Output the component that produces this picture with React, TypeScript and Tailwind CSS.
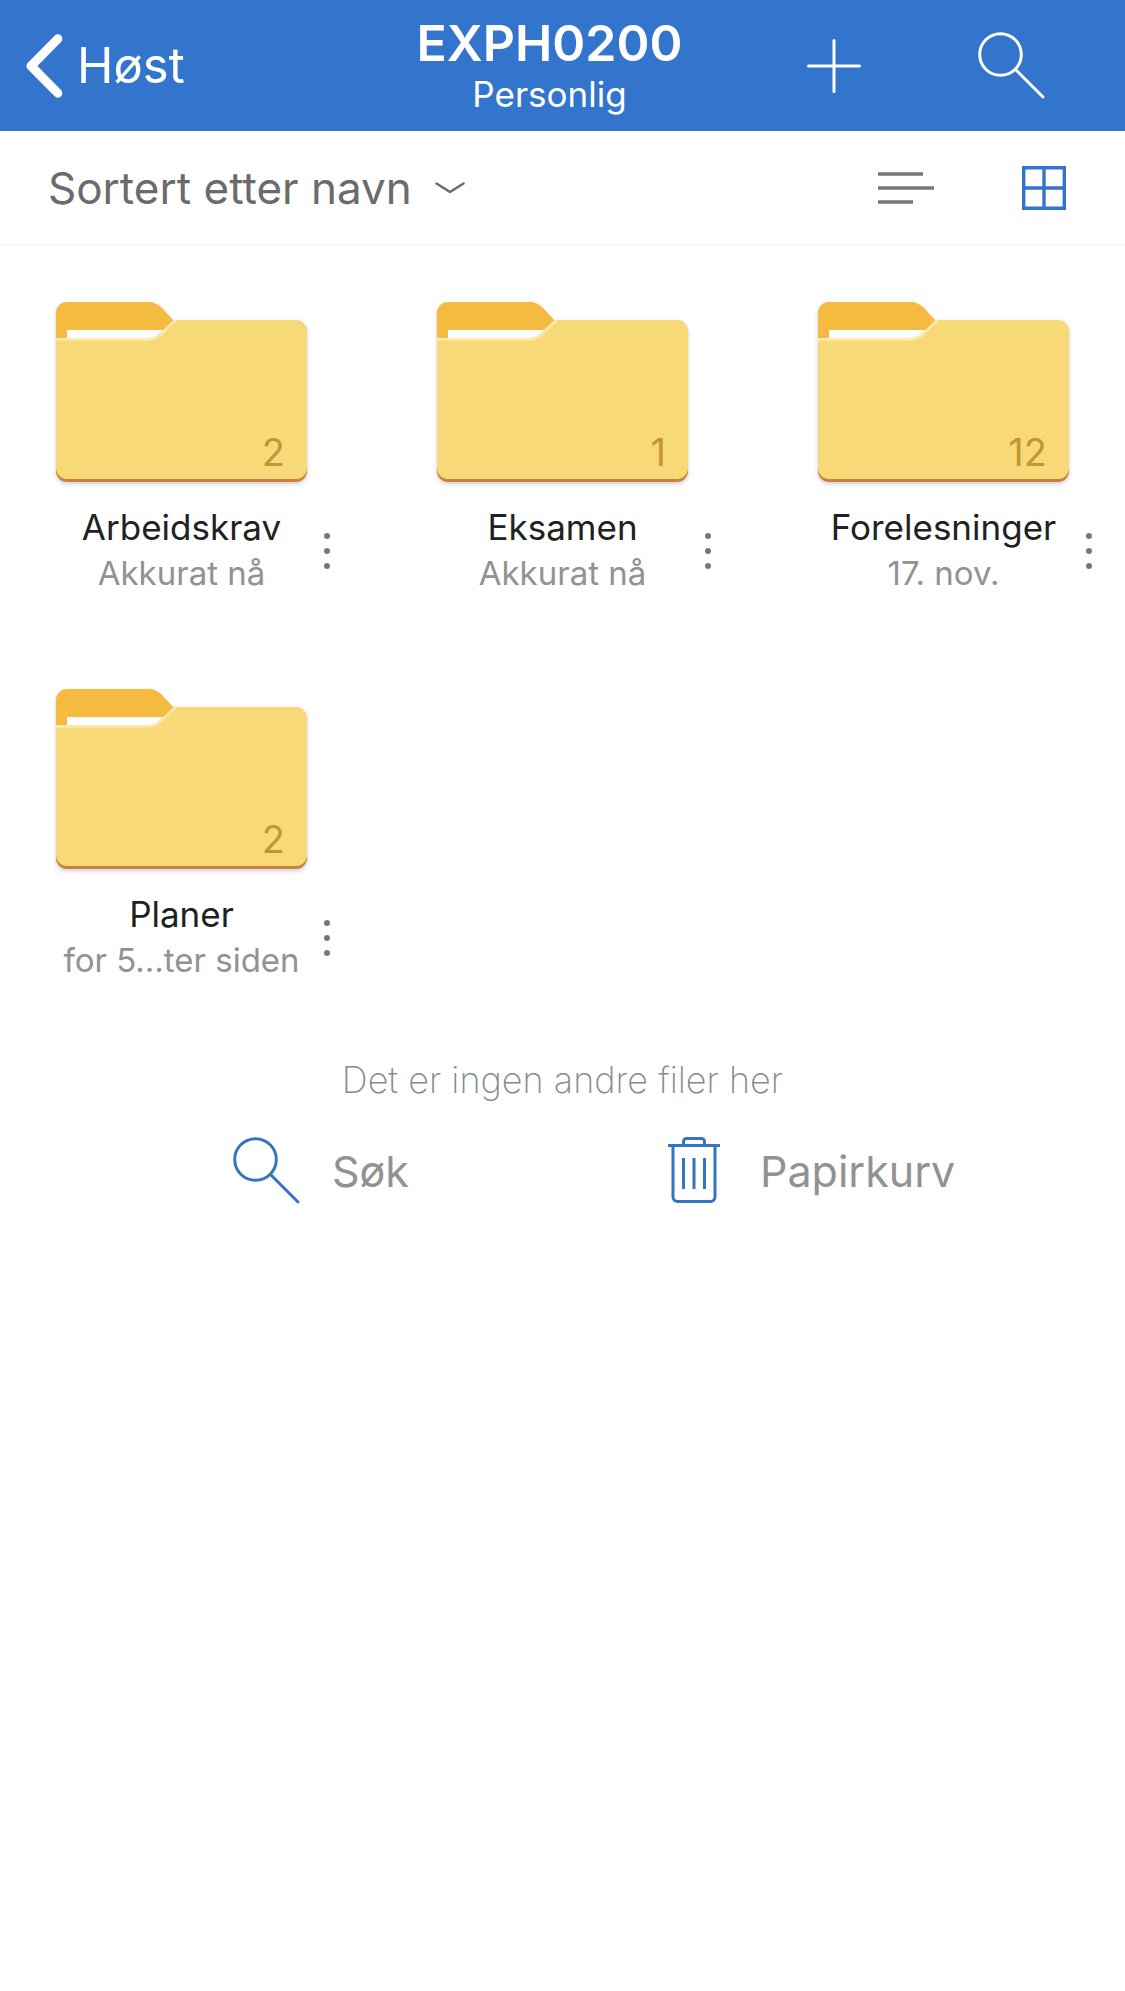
import { useState } from 'react';

interface Folder {
  name: string;
  modified: string;
  count: number;
}

const folders: Folder[] = [
  { name: 'Arbeidskrav', modified: 'Akkurat nå', count: 2 },
  { name: 'Eksamen', modified: 'Akkurat nå', count: 1 },
  { name: 'Forelesninger', modified: '17. nov.', count: 12 },
  { name: 'Planer', modified: 'for 5...ter siden', count: 2 },
];

const SearchIcon = ({ className = '' }) => (
  <svg width="67" height="67" viewBox="0 0 67 67" fill="none" stroke="currentColor" strokeWidth="3" strokeLinecap="round" className={className}>
    <circle cx="22.5" cy="22.5" r="20.8" />
    <path d="M37.5 37.5 65 65" />
  </svg>
);

const BackIcon = () => (
  <svg width="37" height="64" viewBox="0 0 37 64" fill="none" stroke="currentColor" strokeWidth="9" strokeLinecap="round" strokeLinejoin="round">
    <path d="M31.8 4.8 5 32 31.8 59.2" />
  </svg>
);

const PlusIcon = () => (
  <svg width="54" height="54" viewBox="0 0 54 54" fill="none" stroke="currentColor" strokeWidth="3" strokeLinecap="round">
    <path d="M27 1.5v51M1.5 27h51" />
  </svg>
);

const ChevronIcon = () => (
  <svg width="32" height="14" viewBox="0 0 32 14" fill="none" stroke="currentColor" strokeWidth="2.6" strokeLinecap="round" strokeLinejoin="round">
    <path d="M2.5 2.5 16 11 29.5 2.5" />
  </svg>
);

const ListIcon = () => (
  <svg width="56" height="34" viewBox="0 0 56 34" fill="none" stroke="currentColor" strokeWidth="3.6">
    <path d="M0 3h45M0 17h56M0 31h35" />
  </svg>
);

const GridIcon = () => (
  <svg width="44" height="44" viewBox="0 0 44 44" fill="none" stroke="currentColor" strokeWidth="3.4">
    <path d="M1.7 1.7h40.6v40.6H1.7zM22 1.7v40.6M1.7 22h40.6" />
  </svg>
);

const TrashIcon = () => (
  <svg width="52" height="67" viewBox="0 0 52 67" fill="none" stroke="currentColor" strokeWidth="3">
    <path d="M0 8.5h52" />
    <path d="M15.5 8.5V4.5a3 3 0 0 1 3-3h15a3 3 0 0 1 3 3v4" />
    <path d="M5 8.5V60a4.5 4.5 0 0 0 4.5 4.5h33A4.5 4.5 0 0 0 47 60V8.5" />
    <path d="M15.5 21v31M26 21v31M36.5 21v31" />
  </svg>
);

const DotsIcon = () => (
  <svg width="6" height="36" viewBox="0 0 6 36" fill="currentColor">
    <circle cx="3" cy="3" r="3" />
    <circle cx="3" cy="18" r="3" />
    <circle cx="3" cy="33" r="3" />
  </svg>
);

const FolderIcon = () => (
  <svg width="251" height="180" viewBox="0 0 251 180" className="drop-shadow-[0_2px_2px_rgba(60,60,90,0.25)]">
    {/* back tab and paper */}
    <path d="M0 40V11A11 11 0 0 1 11 0h81c6 0 9 2 13 5l12 13v22z" fill="#f5bb41" />
    <path d="M11 28h98v12H11z" fill="#fff" />
    {/* front, with the darker bottom edge under it */}
    <path d="M0 150h251v19a11 11 0 0 1-11 11H11a11 11 0 0 1-11-11z" fill="#cf7f3d" />
    <path d="M0 36h92c6 0 10-3 13-6l10-10c2-2 3-2 6-2h119a11 11 0 0 1 11 11v137a11 11 0 0 1-11 11H11a11 11 0 0 1-11-11z" fill="#f8d977" />
    <path d="M0 37.4h92c6 0 10-2 14-6l10-10 4-3" fill="none" stroke="#fce8b0" strokeWidth="2.6" />
  </svg>
);

function FolderCard({ folder }: { folder: Folder }) {
  return (
    <article className="flex h-[387px] items-start">
      <a href="#" className="w-[251px] shrink-0">
        <div className="relative">
          <FolderIcon />
          <span className="absolute right-[22px] bottom-[10px] text-[38px] leading-[40px] text-[#c39535]">{folder.count}</span>
        </div>
        <h2 className="mt-6 text-center text-[35px] leading-[42px] whitespace-nowrap text-[#212121]">{folder.name}</h2>
        <p className="text-center text-[33px] leading-[50px] whitespace-nowrap text-[#929292]">{folder.modified}</p>
      </a>
      <button type="button" aria-label={`Flere valg for ${folder.name}`} className="mt-[231px] flex w-10 justify-center text-[#777]">
        <DotsIcon />
      </button>
    </article>
  );
}

export default function App() {
  const [view, setView] = useState<'list' | 'grid'>('grid');

  return (
    <div className="min-h-screen bg-white font-['Inter',sans-serif]">
      <header className="grid h-[131px] grid-cols-[1fr_auto_1fr] items-center bg-[#3375cd] pr-[52px] pl-[26px] text-white">
        <a href="#" className="flex items-center gap-[14px]">
          <BackIcon />
          <span className="text-[49px] leading-[60px]">Høst</span>
        </a>
        <div className="text-center">
          <h1 className="text-[50px] leading-[56px] font-semibold">EXPH0200</h1>
          <p className="text-[35px] leading-[46px]">Personlig</p>
        </div>
        <div className="flex items-center justify-end gap-[117px] pr-7">
          <button type="button" aria-label="Legg til"><PlusIcon /></button>
          <button type="button" aria-label="Søk"><SearchIcon /></button>
        </div>
      </header>

      <div className="flex h-[115px] items-center border-b-2 border-[#f9f9f9] pr-[59px] pl-12">
        <label className="flex items-center gap-[22px] text-[#6b6b6b]">
          <select aria-label="Sortering" className="appearance-none bg-transparent text-[44px] leading-[56px] outline-none">
            <option>Sortert etter navn</option>
          </select>
          <ChevronIcon />
        </label>
        <div className="ml-auto flex items-center gap-[88px]">
          <button type="button" aria-label="Liste" onClick={() => setView('list')} className={view === 'list' ? 'text-[#3375cd]' : 'text-[#777]'}>
            <ListIcon />
          </button>
          <button type="button" aria-label="Rutenett" onClick={() => setView('grid')} className={view === 'grid' ? 'text-[#3375cd]' : 'text-[#777]'}>
            <GridIcon />
          </button>
        </div>
      </div>

      <main>
        <section className="grid grid-cols-3 gap-x-[90px] pt-14 pr-4 pl-14">
          {folders.map((folder) => (
            <FolderCard key={folder.name} folder={folder} />
          ))}
        </section>

        <p className="-mt-[18px] text-center text-[36px] leading-[44px] font-extralight text-[#8a8a8a]">Det er ingen andre filer her</p>

        <div className="mt-[35px] grid grid-cols-2 pr-[22px] pl-[233px] text-[43px] leading-[56px] text-[#929292]">
          <a href="#" className="flex items-center gap-8">
            <SearchIcon className="text-[#3375bf]" />
            Søk
          </a>
          <a href="#" className="flex items-center gap-10">
            <span className="text-[#3375bf]"><TrashIcon /></span>
            Papirkurv
          </a>
        </div>
      </main>
    </div>
  );
}
